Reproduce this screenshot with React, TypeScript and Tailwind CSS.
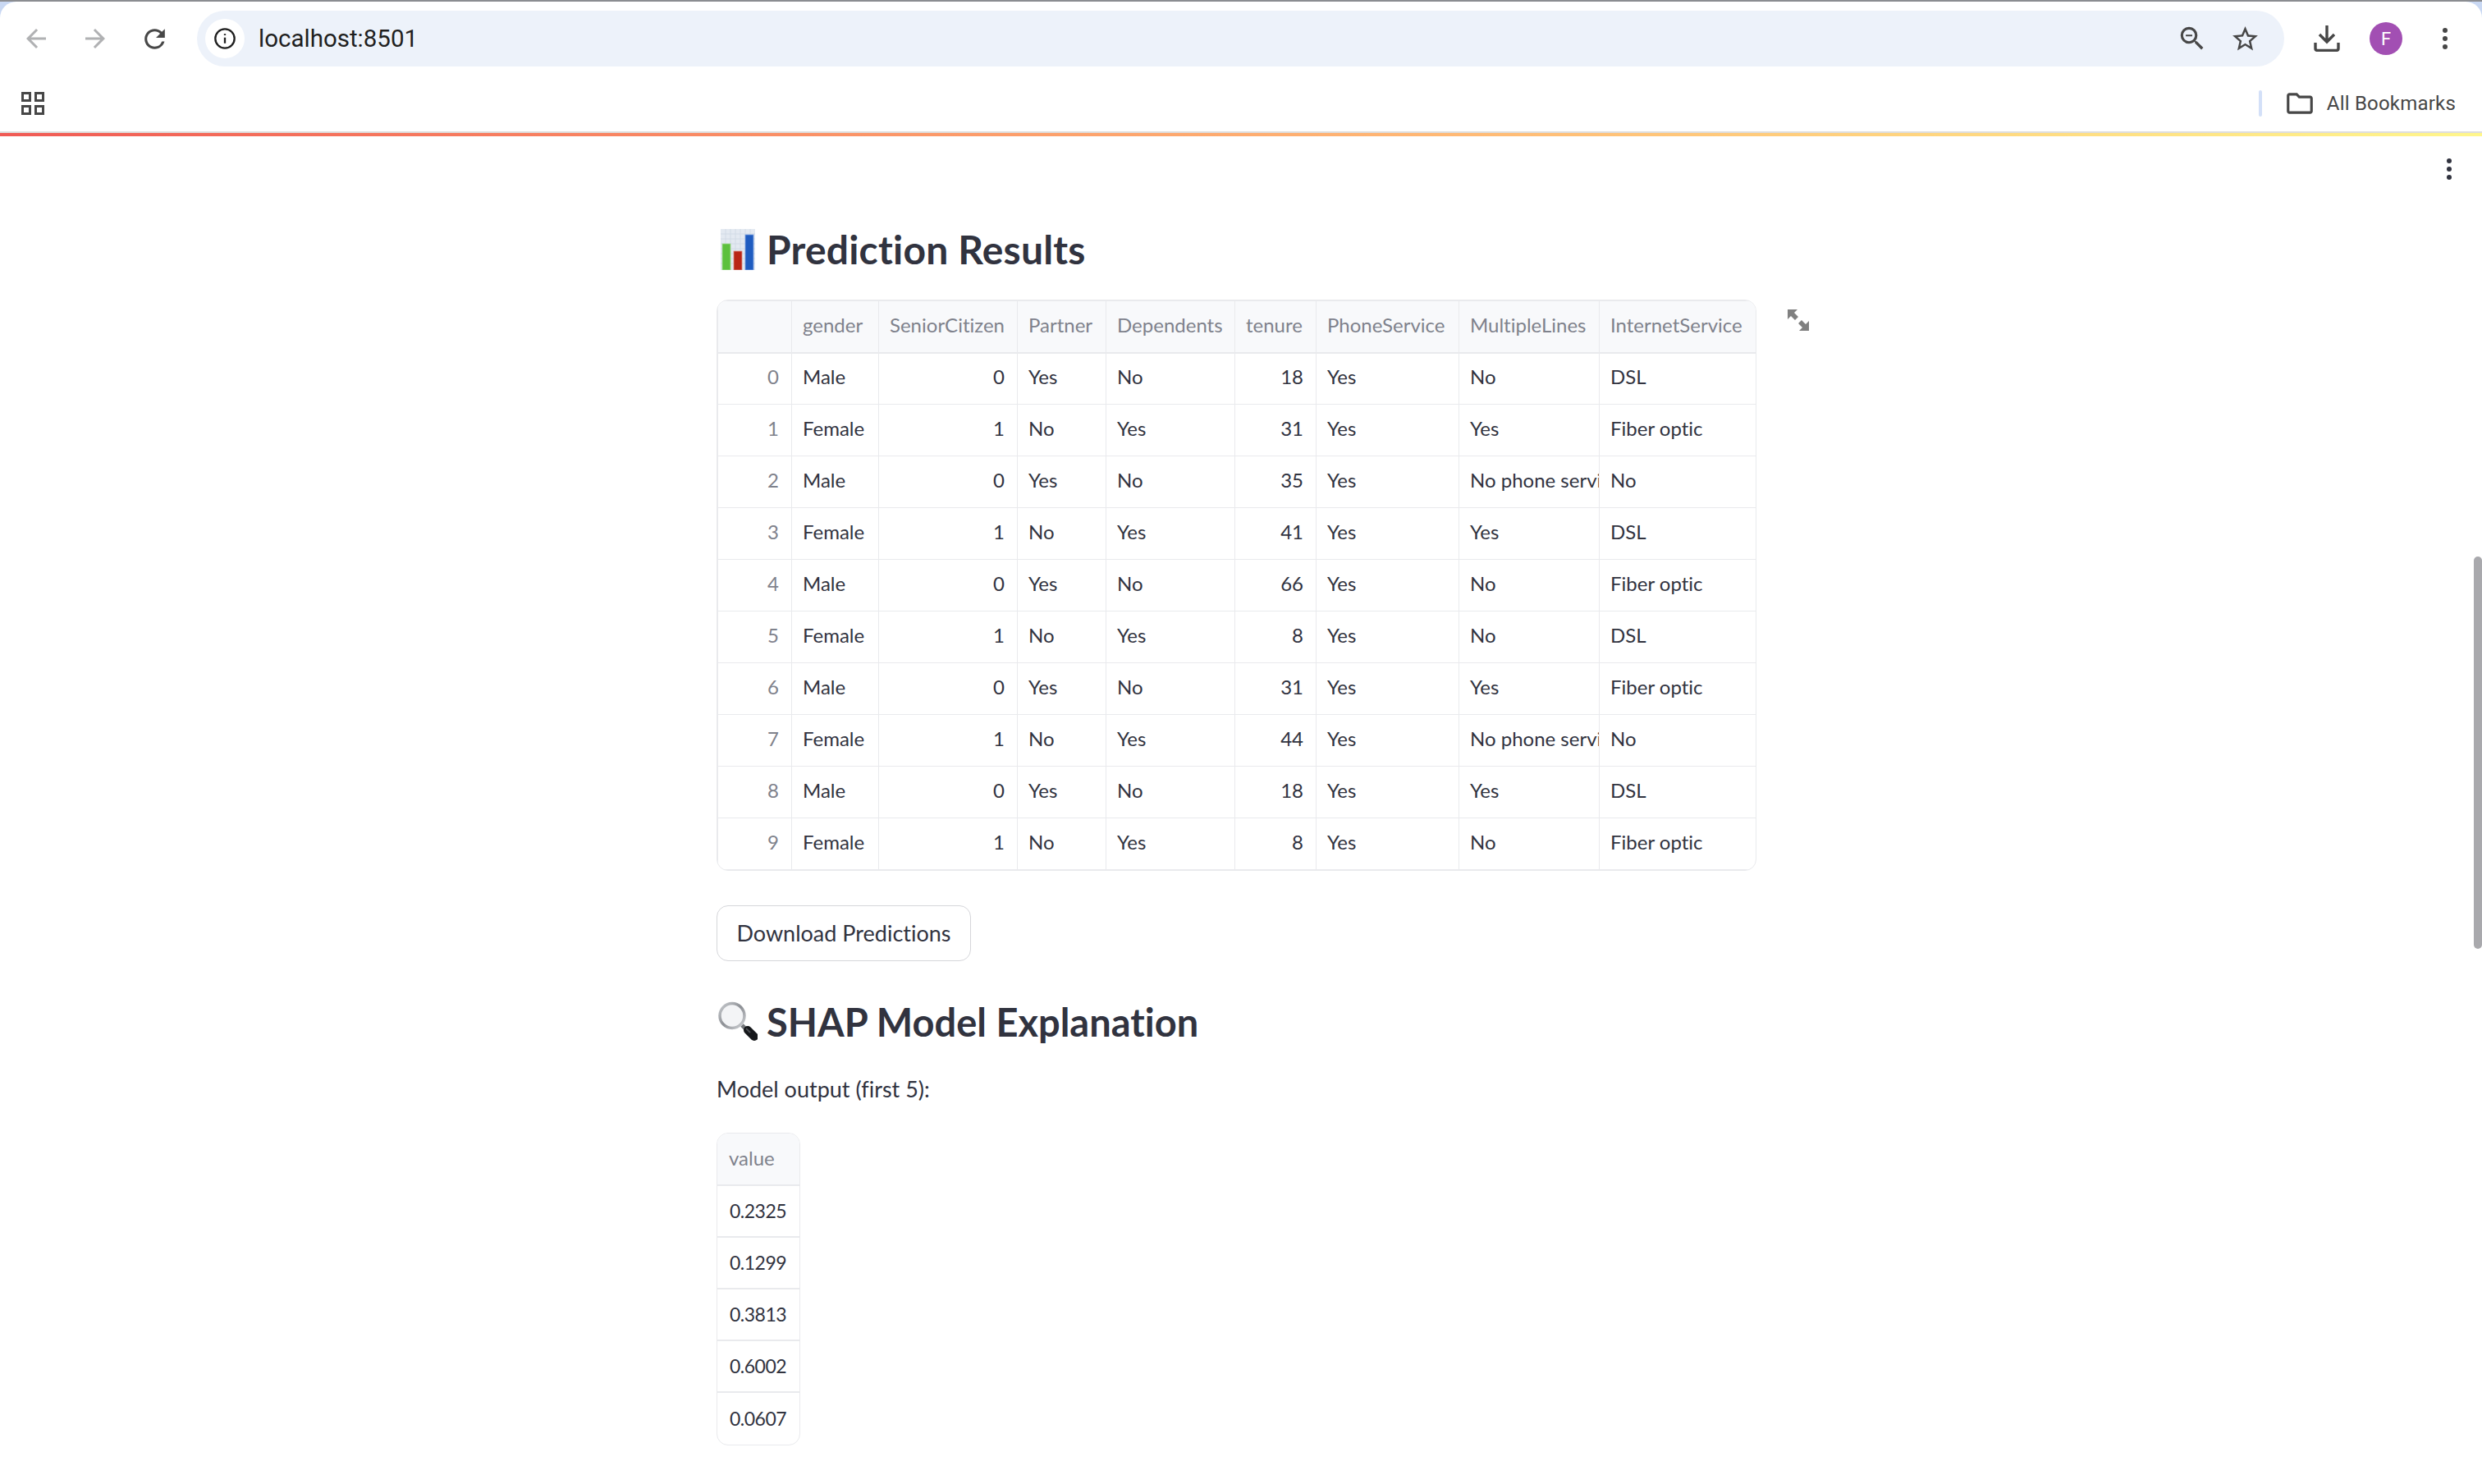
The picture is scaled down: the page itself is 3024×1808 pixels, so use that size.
const sans = 'font-["Lato",sans-serif] [font-variant-ligatures:none]'

const columns = [
  { label: '', width: 'w-[90px]', align: 'right' },
  { label: 'gender', width: 'w-[106px]', align: 'left' },
  { label: 'SeniorCitizen', width: 'w-[169px]', align: 'right' },
  { label: 'Partner', width: 'w-[108px]', align: 'left' },
  { label: 'Dependents', width: 'w-[157px]', align: 'left' },
  { label: 'tenure', width: 'w-[99px]', align: 'right' },
  { label: 'PhoneService', width: 'w-[174px]', align: 'left' },
  { label: 'MultipleLines', width: 'w-[171px]', align: 'left' },
  { label: 'InternetService', width: 'w-[191px]', align: 'left' },
]

const rows = [
  ['0', 'Male', '0', 'Yes', 'No', '18', 'Yes', 'No', 'DSL'],
  ['1', 'Female', '1', 'No', 'Yes', '31', 'Yes', 'Yes', 'Fiber optic'],
  ['2', 'Male', '0', 'Yes', 'No', '35', 'Yes', 'No phone servi', 'No'],
  ['3', 'Female', '1', 'No', 'Yes', '41', 'Yes', 'Yes', 'DSL'],
  ['4', 'Male', '0', 'Yes', 'No', '66', 'Yes', 'No', 'Fiber optic'],
  ['5', 'Female', '1', 'No', 'Yes', '8', 'Yes', 'No', 'DSL'],
  ['6', 'Male', '0', 'Yes', 'No', '31', 'Yes', 'Yes', 'Fiber optic'],
  ['7', 'Female', '1', 'No', 'Yes', '44', 'Yes', 'No phone servi', 'No'],
  ['8', 'Male', '0', 'Yes', 'No', '18', 'Yes', 'Yes', 'DSL'],
  ['9', 'Female', '1', 'No', 'Yes', '8', 'Yes', 'No', 'Fiber optic'],
]

const values = ['0.2325', '0.1299', '0.3813', '0.6002', '0.0607']

function ChartEmoji() {
  return (
    <svg viewBox="0 0 42 50" className="h-[50px] w-[42px] shrink-0" aria-hidden>
      <rect width="42" height="50" fill="#e3e9f1" />
      <path d="M0 6h42M0 12h42M0 18h42M0 24h42M0 30h42M0 36h42M0 42h42M6 0v50M12 0v50M18 0v50M24 0v50M30 0v50M36 0v50" stroke="#d2dbe6" strokeWidth="1" />
      <rect x="2" y="18" width="10" height="32" fill="#5cc03e" stroke="#a5dc94" strokeWidth="0.8" />
      <rect x="16" y="27" width="10" height="23" fill="#b92516" stroke="#d98a80" strokeWidth="0.8" />
      <rect x="30" y="7" width="10" height="43" fill="#1f5cc0" stroke="#7fa3e0" strokeWidth="0.8" />
    </svg>
  )
}

function MagnifierEmoji() {
  return (
    <svg viewBox="0 0 50 50" className="h-[50px] w-[50px] shrink-0" aria-hidden>
      <defs>
        <linearGradient id="ring" x1="0" y1="0" x2="1" y2="1">
          <stop offset="0" stopColor="#c9ccd0" />
          <stop offset="0.5" stopColor="#8c8f94" />
          <stop offset="1" stopColor="#d2d4d8" />
        </linearGradient>
      </defs>
      <path d="M31 29l6 6" stroke="#75787c" strokeWidth="5" />
      <path d="M38 35l8 8" stroke="#15171a" strokeWidth="10" strokeLinecap="round" />
      <path d="M36 33l5 5" stroke="#4a4d52" strokeWidth="2" />
      <circle cx="19" cy="17.500" r="15" fill="#f3f4f6" stroke="url(#ring)" strokeWidth="3.500" />
    </svg>
  )
}

function Cell({ text, align, head, index }: { text: string; align: string; head?: boolean; index?: boolean }) {
  return (
    <td
      className={`overflow-hidden whitespace-nowrap border border-[#e9eaed] pb-[4px] ${
        align === 'right' ? 'pl-[13px] pr-[15px] text-right' : 'px-[13px] text-left'
      } ${head ? 'bg-[#f8f9fb] text-[#7f828c]' : index ? 'text-[#7f828c]' : 'text-[#31333f]'}`}
    >
      {text}
    </td>
  )
}

function DataTable() {
  return (
    <div className="w-[1267px] overflow-hidden rounded-[14px] border border-[#e9eaed] bg-white">
      <table className="w-full table-fixed border-collapse text-[24px]">
        <colgroup>
          {columns.map((c) => (
            <col key={c.label} className={c.width} />
          ))}
        </colgroup>
        <thead>
          <tr className="h-[63px] border-b-2 border-[#e9eaed]">
            {columns.map((c) => (
              <Cell key={c.label} text={c.label} align="left" head />
            ))}
          </tr>
        </thead>
        <tbody>
          {rows.map((row) => (
            <tr key={row[0]} className="h-[63px]">
              {row.map((v, i) => (
                <Cell key={i} text={v} align={columns[i].align} index={i === 0} />
              ))}
            </tr>
          ))}
        </tbody>
      </table>
    </div>
  )
}

function ValueTable() {
  return (
    <div className="mt-[35px] w-[102px] overflow-hidden rounded-[14px] border border-[#e9eaed] bg-white text-[24px]">
      <div className="flex h-[64px] items-center border-b-2 border-[#e9eaed] bg-[#f8f9fb] px-[14px] pb-[2px] text-[#7f828c]">value</div>
      {values.map((v) => (
        <div key={v} className="flex h-[63px] items-center border-b-2 border-[#e9eaed] px-[15px] text-[23px] tracking-[-0.5px] text-[#31333f] last:border-b-0">
          {v}
        </div>
      ))}
    </div>
  )
}

function BrowserBar() {
  return (
    <div className="relative bg-[#c9d8f3]">
      <div className="h-[2px] bg-[#8b8d91]" />
      <div className="rounded-t-[20px] bg-white">
        <div className="flex h-[90px] items-center pl-[26px] pr-[35px]">
          <svg viewBox="0 0 24 24" className="h-[36px] w-[36px] text-[#b0b1b3]" fill="currentColor" aria-hidden>
            <path d="M20 11H7.830l5.590-5.590L12 4l-8 8 8 8 1.410-1.410L7.830 13H20v-2z" />
          </svg>
          <svg viewBox="0 0 24 24" className="ml-[36px] h-[36px] w-[36px] text-[#b0b1b3]" fill="currentColor" aria-hidden>
            <path d="M12 4l-1.410 1.410L16.170 11H4v2h12.170l-5.580 5.590L12 20l8-8z" />
          </svg>
          <svg viewBox="0 0 24 24" className="ml-[36px] h-[37px] w-[37px] text-[#474747]" fill="currentColor" aria-hidden>
            <path d="M17.650 6.350A7.958 7.958 0 0 0 12 4c-4.420 0-7.990 3.580-7.990 8s3.570 8 7.990 8c3.730 0 6.840-2.550 7.730-6h-2.080A5.990 5.990 0 0 1 12 18c-3.310 0-6-2.690-6-6s2.690-6 6-6c1.660 0 3.140.690 4.220 1.780L13 11h7V4l-2.350 2.350z" />
          </svg>
          <div className="ml-[33px] flex h-[68px] flex-1 items-center rounded-full bg-[#edf2fa] pl-[10px] pr-[29px]">
            <div className="flex h-[48px] w-[48px] items-center justify-center rounded-full bg-white">
              <svg viewBox="0 0 24 24" className="h-[28px] w-[28px] text-[#1f1f1f]" fill="none" stroke="currentColor" strokeWidth="2" aria-hidden>
                <circle cx="12" cy="12" r="10" />
                <path d="M12 11v6M12 7v1.600" />
              </svg>
            </div>
            <span className="ml-[17px] flex-1 font-['Roboto',sans-serif] text-[29.5px] text-[#1f1f1f]">localhost:8501</span>
            <svg viewBox="0 0 24 24" className="h-[38px] w-[38px] text-[#474747]" fill="currentColor" aria-hidden>
              <path d="M15.500 14h-.79l-.28-.27A6.471 6.471 0 0 0 16 9.500 6.500 6.500 0 1 0 9.500 16c1.610 0 3.090-.59 4.230-1.570l.27.28v.79l5 4.990L20.490 19l-4.990-5zm-6 0C7.010 14 5 11.990 5 9.500S7.010 5 9.500 5 14 7.010 14 9.500 11.990 14 9.500 14zM7 9h5v1.200H7z" />
            </svg>
            <svg viewBox="0 0 24 24" className="ml-[27px] h-[37px] w-[37px] text-[#474747]" fill="currentColor" aria-hidden>
              <path d="M22 9.240l-7.190-.62L12 2 9.190 8.630 2 9.240l5.460 4.730L5.820 21 12 17.270 18.180 21l-1.630-7.030L22 9.240zM12 15.400l-3.760 2.270 1-4.280-3.320-2.880 4.380-.38L12 6.100l1.710 4.040 4.380.38-3.320 2.880 1 4.280L12 15.400z" />
            </svg>
          </div>
          <svg viewBox="0 0 32 32" className="ml-[36px] h-[32px] w-[32px] text-[#474747]" fill="none" stroke="currentColor" strokeWidth="3.400" aria-hidden>
            <path d="M16 0v19M7 11l9 9 9-9M2 21v7c0 1.500 1 2.400 2.400 2.400h23.200c1.400 0 2.400-.9 2.400-2.400v-7" />
          </svg>
          <div className="ml-[36px] flex h-[40px] w-[40px] items-center justify-center rounded-full bg-[#a24fb3] font-['Roboto',sans-serif] text-[22px] text-white">F</div>
          <div className="ml-[42px] flex w-[20px] flex-col items-center gap-[4px]">
            <span className="h-[6px] w-[6px] rounded-full bg-[#474747]" />
            <span className="h-[6px] w-[6px] rounded-full bg-[#474747]" />
            <span className="h-[6px] w-[6px] rounded-full bg-[#474747]" />
          </div>
        </div>
        <div className="flex h-[68px] items-center pl-[26px] pr-[32px]">
          <div className="grid h-[28px] w-[28px] grid-cols-2 gap-[4px]">
            <span className="border-[3px] border-[#474747]" />
            <span className="border-[3px] border-[#474747]" />
            <span className="border-[3px] border-[#474747]" />
            <span className="border-[3px] border-[#474747]" />
          </div>
          <div className="ml-auto h-[32px] w-[4px] rounded-full bg-[#d3e0f8]" />
          <svg viewBox="0 0 24 24" className="ml-[27px] h-[38px] w-[38px] text-[#474747]" fill="currentColor" aria-hidden>
            <path d="M20 6h-8l-2-2H4c-1.100 0-1.990.9-1.990 2L2 18c0 1.100.9 2 2 2h16c1.100 0 2-.9 2-2V8c0-1.100-.9-2-2-2zm0 12H4V6h5.170l2 2H20v10z" />
          </svg>
          <span className="ml-[14px] font-['Roboto',sans-serif] text-[24px] tracking-[0.2px] text-[#474747]">All Bookmarks</span>
        </div>
      </div>
      <div className="h-[2px] bg-[#dedede]" />
      <div className="h-[4px] bg-gradient-to-r from-[#f05a55] to-[#fff68c]" />
    </div>
  )
}

export default function App() {
  return (
    <div className={`relative h-[1808px] w-[3024px] overflow-hidden bg-white ${sans}`}>
      <BrowserBar />

      <div className="absolute right-[37px] top-[193px] flex flex-col gap-[4px]">
        <span className="h-[6px] w-[6px] rounded-full bg-[#31333f]" />
        <span className="h-[6px] w-[6px] rounded-full bg-[#31333f]" />
        <span className="h-[6px] w-[6px] rounded-full bg-[#31333f]" />
      </div>
      <div className="absolute right-0 top-[678px] h-[478px] w-[10px] rounded-full bg-[#a9a9ad]" />

      <main className="ml-[873px] w-[1340px] pt-[113px]">
        <h3 className="flex h-[50px] items-center gap-[14px] pl-[5px] text-[48px] tracking-[0.2px] font-bold text-[#31333f]">
          <ChartEmoji />
          Prediction Results
        </h3>
        <div className="mt-[36px] flex items-start gap-[38px]">
          <DataTable />
          <svg viewBox="0 0 26 26" className="mt-[12px] h-[26px] w-[26px] text-[#808080]" fill="currentColor" aria-hidden>
            <path d="M0 0h12L8 4l5 5-4 4-5-5-4 4zM26 26H14l4-4-5-5 4-4 5 5 4-4z" />
          </svg>
        </div>
        <button
          type="button"
          className="mt-[42px] flex h-[68px] w-[310px] items-center justify-center rounded-[14px] border border-[#d5d6da] bg-white text-[27px] text-[#31333f]"
        >
          Download Predictions
        </button>
        <h3 className="mt-[49px] flex h-[50px] items-center gap-[11px] text-[47px] font-bold text-[#31333f]">
          <MagnifierEmoji />
          SHAP Model Explanation
        </h3>
        <p className="mt-[39px] text-[27px] leading-[36px] text-[#31333f]">Model output (first 5):</p>
        <ValueTable />
      </main>
    </div>
  )
}
